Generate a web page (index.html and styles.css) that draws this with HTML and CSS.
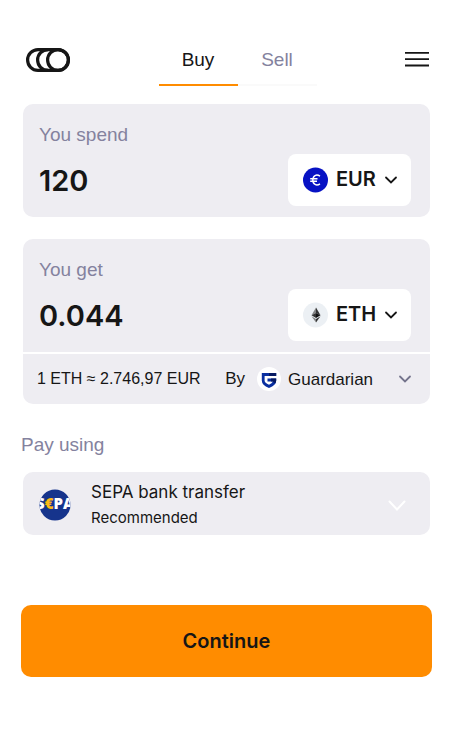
FILE: index.html
```html
<!DOCTYPE html>
<html lang="en">
<head>
<meta charset="utf-8">
<meta name="viewport" content="width=device-width, initial-scale=1">
<title>Buy crypto</title>
<link rel="stylesheet" href="styles.css">
</head>
<body>
<header class="top">
  <a class="logo" href="#" aria-label="Home">
    <svg width="44" height="24" viewBox="0 0 44 24" fill="none" stroke="#161616" stroke-width="3.200">
      <rect x="1.600" y="1.600" width="40.800" height="20.800" rx="10.400"/>
      <path d="M22 1.600a10.400 10.400 0 0 0 0 20.800"/>
      <circle cx="32" cy="12" r="10.400"/>
    </svg>
  </a>
  <nav class="tabs">
    <a class="tab tab-active" href="#buy" aria-current="page">Buy</a>
    <a class="tab" href="#sell">Sell</a>
  </nav>
  <button class="menu" type="button" aria-label="Menu">
    <svg width="24" height="16" viewBox="0 0 24 16" stroke="#161616" stroke-width="1.800"><path d="M0 .9h24M0 7.200h24M0 13.500h24"/></svg>
  </button>
</header>
<main>
  <form class="form">
    <section class="card amount">
      <label class="label" for="spend">You spend</label>
      <div class="row">
        <input class="value" id="spend" type="text" inputmode="decimal" value="120">
        <div class="picker currency">
          <svg class="coin" width="26" height="26" viewBox="0 0 26 26" fill="none">
            <circle cx="12.500" cy="13" r="12.500" fill="#0712c4"/>
            <path d="M17 9.200C13.500 6.800 9.800 8.500 9.800 13s3.700 6.200 7.200 3.800M7.200 11.800h7.300M7.200 14.200h6.800" stroke="#fff" stroke-width="1.400"/>
          </svg>
          <select class="select" aria-label="Currency to spend"><option>EUR</option></select>
          <svg class="chevron" width="14" height="8" viewBox="0 0 14 8" fill="none" stroke="#161616" stroke-width="1.800" stroke-linecap="round"><path d="m2 1.500 5 5 5-5"/></svg>
        </div>
      </div>
    </section>
    <section class="receive">
      <div class="amount">
        <label class="label" for="get">You get</label>
        <div class="row">
          <input class="value" id="get" type="text" inputmode="decimal" value="0.044">
          <div class="picker currency">
            <svg class="coin" width="26" height="26" viewBox="0 0 26 26">
              <circle cx="12.500" cy="13" r="12.500" fill="#ecf0f4"/>
              <path d="M13 5.500 8.500 13.200 13 11z" fill="#828384"/>
              <path d="m13 5.500 4.500 7.700L13 11z" fill="#343434"/>
              <path d="M13 11 8.500 13.200 13 16z" fill="#343434"/>
              <path d="m13 11 4.500 2.200L13 16z" fill="#111"/>
              <path d="m8.500 14.200 4.500 2.800v3.500z" fill="#828384"/>
              <path d="M17.500 14.200 13 17v3.500z" fill="#343434"/>
            </svg>
            <select class="select" aria-label="Currency to get"><option>ETH</option></select>
            <svg class="chevron" width="14" height="8" viewBox="0 0 14 8" fill="none" stroke="#161616" stroke-width="1.800" stroke-linecap="round"><path d="m2 1.500 5 5 5-5"/></svg>
          </div>
        </div>
      </div>
      <div class="rate">
        <span class="quote">1 ETH ≈ 2.746,97 EUR</span>
        <label class="by" for="provider">By</label>
        <div class="picker provider">
          <svg class="coin" width="24" height="24" viewBox="0 0 24 24">
            <circle cx="12" cy="12" r="12" fill="#fff"/>
            <path d="M4.800 6h14.400v3H7.600v4.500q0 2.500 4.400 4.200 3-1.200 4-3.200h-5.500v-3h8.700v2q0 4.500-7.200 7.500-7.200-3-7.200-7.500z" fill="#0a2fa0"/>
            <path d="M12 6h7.200v3H12zm2 5.500h5.200v2q0 1.500-1 3L16 14.500h-2z" fill="#071a62"/>
          </svg>
          <select class="select" id="provider"><option>Guardarian</option></select>
          <svg class="chevron" width="14" height="8" viewBox="0 0 14 8" fill="none" stroke="#74748c" stroke-width="1.800" stroke-linecap="round"><path d="m2 1.500 5 5 5-5"/></svg>
        </div>
      </div>
    </section>
    <h2 class="label heading">Pay using</h2>
    <button class="card method" type="button" aria-haspopup="listbox">
      <svg width="32" height="32" viewBox="0 0 32 32">
        <defs><clipPath id="disc"><circle cx="16" cy="16" r="15.500"/></clipPath></defs>
        <g clip-path="url(#disc)">
          <rect width="32" height="32" fill="#16348c"/>
          <text class="sepa" x="16" y="20" text-anchor="middle">S<tspan fill="#fdb913">€</tspan>PA</text>
        </g>
      </svg>
      <span class="method-text">
        <span class="method-name">SEPA bank transfer</span>
        <span class="method-note">Recommended</span>
      </span>
      <svg width="18" height="11" viewBox="0 0 18 11" fill="none" stroke="#fff" stroke-width="2" stroke-linecap="round"><path d="m1.500 1.500 7.500 8 7.500-8"/></svg>
    </button>
    <button class="submit" type="submit">Continue</button>
  </form>
</main>
</body>
</html>
```
FILE: styles.css
```css
* { box-sizing: border-box; }

body {
  margin: 0;
  background: #fff;
  color: #161616;
  font-family: Inter, "Liberation Sans", sans-serif;
}

button, input, select {
  margin: 0;
  padding: 0;
  border: 0;
  background: none;
  color: inherit;
  font: inherit;
}

button, select { cursor: pointer; }
svg { display: block; flex: none; }

.top {
  display: flex;
  align-items: center;
  justify-content: space-between;
  padding: 34px 24px 0 26px;
}

.tabs {
  display: flex;
  width: 158px;
}

.tab {
  flex: 1;
  height: 52px;
  border-bottom: 2px solid #fafafa;
  color: #84829e;
  font-family: "Liberation Sans", Arial, sans-serif;
  font-size: 19px;
  line-height: 52px;
  text-align: center;
  text-decoration: none;
}

.tab-active {
  border-color: #ff8c00;
  color: #161616;
}

.form {
  display: flex;
  flex-direction: column;
  padding: 18px 23px;
}

.card {
  border-radius: 10px;
  background: #eeedf2;
}

.amount {
  padding: 18px 19px 11px 16px;
  background: #eeedf2;
}

.label {
  display: block;
  color: #84829e;
  font-family: "Liberation Sans", Arial, sans-serif;
  font-size: 19px;
  font-weight: 400;
  line-height: 26px;
}

.row {
  display: flex;
  align-items: center;
  gap: 12px;
  margin-top: 6px;
}

.value {
  flex: 1;
  min-width: 0;
  height: 52px;
  font-size: 29px;
  font-weight: 600;
}

.picker {
  display: grid;
  align-items: center;
}

.picker > * { grid-area: 1 / 1; }

.coin, .chevron {
  z-index: 1;
  pointer-events: none;
}

.chevron { justify-self: end; }

.select {
  width: 100%;
  appearance: none;
}

.currency {
  width: 123px;
  border-radius: 8px;
  background: #fff;
}

.currency .coin { margin-left: 15px; }
.currency .chevron { margin-right: 13px; }

.currency .select {
  height: 52px;
  padding: 0 0 2px 48px;
  font-size: 20px;
  font-weight: 600;
}

.receive {
  display: grid;
  grid-template-columns: minmax(0, 1fr);
  gap: 2px;
  margin-top: 22px;
  overflow: hidden;
  border-radius: 10px;
}

.rate {
  display: flex;
  align-items: center;
  height: 50px;
  padding: 0 18px 0 14px;
  background: #eeedf2;
  font-family: "Liberation Sans", Arial, sans-serif;
  font-size: 17px;
}

.quote {
  flex: 1;
  font-size: 16px;
}

.by { margin-right: 12px; }
.provider { width: 155px; }

.provider .select {
  height: 50px;
  padding-left: 31px;
}

.heading { margin: 28px -2px 14px; }

.method {
  display: flex;
  align-items: center;
  gap: 20px;
  padding: 7px 24px 4px 16px;
  text-align: left;
}

.sepa {
  fill: #fff;
  font-family: "Open Sans", sans-serif;
  font-size: 15px;
  font-weight: 800;
}

.method-text {
  display: grid;
  flex: 1;
}

.method-name, .method-note { line-height: 26px; }
.method-name { font-size: 17px; }
.method-note { font-size: 15px; }

.submit {
  height: 72px;
  margin: 70px -2px 0;
  border-radius: 10px;
  background: #ff8c00;
  font-size: 20px;
  font-weight: 600;
}
```
